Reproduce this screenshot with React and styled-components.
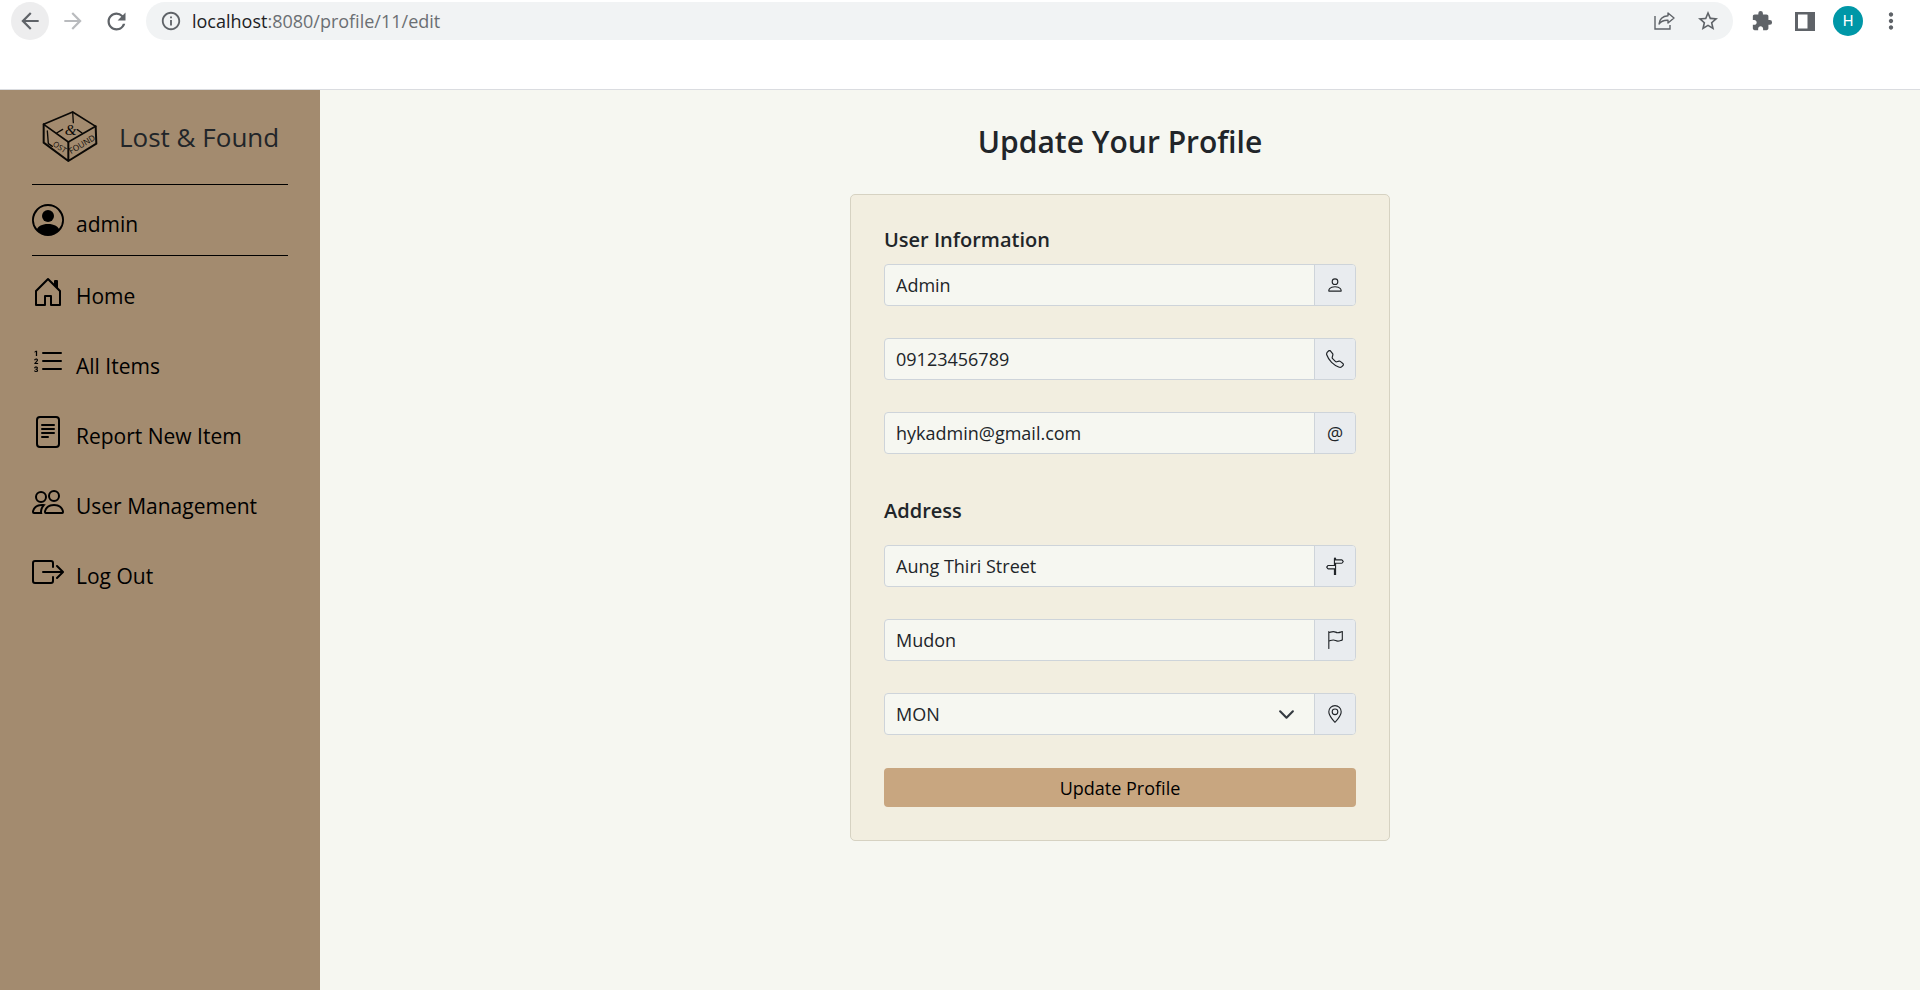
import React from "react";
import styled, { createGlobalStyle } from "styled-components";
import {
  BsPersonCircle,
  BsHouseDoor,
  BsListOl,
  BsFileText,
  BsPeople,
  BsBoxArrowRight,
  BsPerson,
  BsTelephone,
  BsSignpostSplit,
  BsFlag,
  BsGeoAlt,
} from "react-icons/bs";
import {
  MdArrowBack,
  MdArrowForward,
  MdRefresh,
  MdInfoOutline,
  MdStarOutline,
  MdExtension,
  MdMoreVert,
} from "react-icons/md";

const GlobalStyle = createGlobalStyle`
  *, *::before, *::after { box-sizing: border-box; }
  body {
    margin: 0;
    background: #ffffff;
    color: #212529;
    font-family: "Open Sans", "Noto Sans", sans-serif;
    font-size: 18px;
    line-height: 24px;
  }
  button, input, select { font: inherit; color: inherit; }
`;

const Page = styled.div`
  min-height: 100vh;
  display: flex;
  flex-direction: column;
`;

const BrowserBar = styled.header`
  display: flex;
  align-items: center;
  gap: 5px;
  padding: 2px 10px 49px 11px;
  border-bottom: 1px solid #dadce0;
`;

const ToolButton = styled.button`
  flex: none;
  display: grid;
  place-items: center;
  width: 38px;
  height: 38px;
  padding: 0;
  border: 0;
  border-radius: 50%;
  background: ${(p) => (p.$active ? "#ededee" : "transparent")};
  color: ${(p) => (p.$muted ? "#b9bbbe" : "#5f6368")};
  svg { display: block; }
`;

const AddressBar = styled.div`
  flex: 1;
  min-width: 0;
  display: flex;
  align-items: center;
  height: 38px;
  margin: 0 5px 0 6px;
  padding: 0 6px 0 14px;
  gap: 5px;
  border-radius: 19px;
  background: #f1f3f4;
  color: #5f6368;
`;

const Url = styled.span`
  flex: 1;
  padding-left: 5px;
  color: #6b6f73;
  white-space: nowrap;
  b { font-weight: 400; color: #202124; }
`;

const Avatar = styled.span`
  display: grid;
  place-items: center;
  width: 30px;
  height: 30px;
  border-radius: 50%;
  background: #0097a7;
  color: #ffffff;
  font: 15px/30px Roboto, sans-serif;
`;

const Body = styled.div`
  flex: 1;
  display: flex;
`;

const Sidebar = styled.aside`
  flex: none;
  width: 320px;
  padding: 21px 32px;
  background: #a38b6f;
`;

const Brand = styled.a`
  display: flex;
  align-items: center;
  gap: 22px;
  padding: 0 11px 22px;
  color: #212529;
  font-size: 26px;
  line-height: 36px;
  text-decoration: none;
  white-space: nowrap;
  svg { flex: none; display: block; overflow: visible; }
`;

const Account = styled.div`
  padding: 19px 0;
  border: solid #000000;
  border-width: 1px 0;
`;

const Menu = styled.nav`
  display: flex;
  flex-direction: column;
  gap: 38px;
  padding-top: 20px;
`;

const MenuLink = styled.a`
  display: flex;
  align-items: center;
  gap: 12px;
  height: 32px;
  color: #000000;
  font-size: 21px;
  text-decoration: none;
  svg { flex: none; width: 32px; height: 32px; }
  span { padding-top: 8px; }
`;

const Main = styled.main`
  flex: 1;
  display: flex;
  flex-direction: column;
  align-items: center;
  padding: 32px;
  background: #f6f7f1;
`;

const Title = styled.h1`
  margin: 0 0 32px;
  font-size: 30px;
  line-height: 40px;
  font-weight: 600;
`;

const Card = styled.form`
  width: 100%;
  max-width: 540px;
  padding: 31px 33px 33px;
  border: 1px solid #d6d2c2;
  border-radius: 5px;
  background: #f2eee0;
`;

const Group = styled.fieldset`
  display: flex;
  flex-direction: column;
  gap: 32px;
  min-width: 0;
  margin: 0 0 ${(p) => p.$after};
  padding: 0;
  border: 0;
`;

const GroupTitle = styled.legend`
  margin-bottom: ${(p) => p.$space};
  padding: 0;
  font-size: 20px;
  line-height: 28px;
  font-weight: 600;
`;

const Field = styled.div`
  display: flex;
  height: 42px;
  border: 1px solid #ced4da;
  border-radius: 4px;
  overflow: hidden;
  background: #f6f7f1;
`;

const Input = styled.input`
  flex: 1;
  min-width: 0;
  padding: 0 11px;
  border: 0;
  outline: 0;
  background: transparent;
`;

const SelectWrap = styled.div`
  position: relative;
  flex: 1;
  display: flex;
  svg {
    position: absolute;
    right: 19px;
    top: 12px;
    pointer-events: none;
  }
`;

const Select = styled.select`
  flex: 1;
  padding: 0 11px;
  border: 0;
  outline: 0;
  appearance: none;
  background: transparent;
`;

const Addon = styled.label`
  display: grid;
  place-items: center;
  width: 41px;
  border-left: 1px solid #ced4da;
  background: #e9ecef;
  svg { width: 18px; height: 18px; }
`;

const Submit = styled.button`
  width: 100%;
  height: 39px;
  border: 0;
  border-radius: 4px;
  background: #c8a680;
  color: #000000;
`;

function BoxLogo() {
  return (
    <svg width="54" height="51" viewBox="39 20 162 153" fill="none" stroke="#0b0906" strokeWidth="6" strokeLinecap="round" strokeLinejoin="round" aria-hidden="true">
      <path d="M128 23 41 60l74 53 82-47z" strokeWidth="5" />
      <path d="M41 60v55l74 55 84-52-2-52M115 113v57" />
      <path d="M128 23l2 32M98 75 80 86M142 76l14 10M52 80l3 38 12 8" strokeWidth="4" />
      <g fill="#0b0906" stroke="none" fontFamily="Open Sans, sans-serif">
        <text x="104" y="91" fontSize="46" fontFamily="Liberation Serif, serif" fontStyle="italic">&amp;</text>
        <text fontSize="23" transform="translate(67 123) rotate(34)">OST</text>
        <text fontSize="25" transform="translate(123 150) rotate(-31)">FOUND</text>
      </g>
    </svg>
  );
}

function ShareIcon() {
  return (
    <svg width="22" height="20" viewBox="0 0 22 20" fill="none" stroke="#5f6368" strokeWidth="1.4" aria-hidden="true">
      <path d="M1 5v13h15v-4" />
      <path d="M14 2l6 5-6 5V9.200C9.500 9 7 10 5 13c.4-4.600 3.500-7.800 9-8.300z" strokeLinejoin="round" />
    </svg>
  );
}

function PanelIcon() {
  return (
    <svg width="20" height="19" viewBox="0 0 20 19" aria-hidden="true">
      <path fill="#5f6368" fillRule="evenodd" d="M0 0h20v19H0zM3 2.500v14h9.500v-14z" />
    </svg>
  );
}

const account = { label: "admin", icon: BsPersonCircle };

const menu = [
  { label: "Home", icon: BsHouseDoor },
  { label: "All Items", icon: BsListOl },
  { label: "Report New Item", icon: BsFileText },
  { label: "User Management", icon: BsPeople },
  { label: "Log Out", icon: BsBoxArrowRight },
];

function MenuItem({ label, icon: Icon }) {
  return (
    <MenuLink href="#">
      <Icon aria-hidden="true" />
      <span>{label}</span>
    </MenuLink>
  );
}

function TextField({ id, name, type = "text", value, children }) {
  return (
    <Field>
      <Input id={id} type={type} defaultValue={value} aria-label={name} />
      <Addon htmlFor={id}>{children}</Addon>
    </Field>
  );
}

export default function App() {
  return (
    <Page>
      <GlobalStyle />
      <BrowserBar>
        <ToolButton $active aria-label="Back"><MdArrowBack size={26} /></ToolButton>
        <ToolButton $muted aria-label="Forward"><MdArrowForward size={26} /></ToolButton>
        <ToolButton aria-label="Reload"><MdRefresh size={27} /></ToolButton>
        <AddressBar>
          <MdInfoOutline size={22} />
          <Url><b>localhost</b>:8080/profile/11/edit</Url>
          <ToolButton aria-label="Share"><ShareIcon /></ToolButton>
          <ToolButton aria-label="Bookmark"><MdStarOutline size={24} /></ToolButton>
        </AddressBar>
        <ToolButton aria-label="Extensions"><MdExtension size={22} /></ToolButton>
        <ToolButton aria-label="Side panel"><PanelIcon /></ToolButton>
        <ToolButton aria-label="Account"><Avatar>H</Avatar></ToolButton>
        <ToolButton aria-label="Menu"><MdMoreVert size={26} /></ToolButton>
      </BrowserBar>
      <Body>
        <Sidebar>
          <Brand href="#"><BoxLogo />Lost &amp; Found</Brand>
          <Account><MenuItem {...account} /></Account>
          <Menu aria-label="Main">
            {menu.map((item) => <MenuItem key={item.label} {...item} />)}
          </Menu>
        </Sidebar>
        <Main>
          <Title>Update Your Profile</Title>
          <Card onSubmit={(e) => e.preventDefault()}>
            <Group $after="43px">
              <GroupTitle $space="10px">User Information</GroupTitle>
              <TextField id="name" name="Name" value="Admin"><BsPerson /></TextField>
              <TextField id="phone" name="Phone" type="tel" value="09123456789"><BsTelephone /></TextField>
              <TextField id="email" name="Email" type="email" value="hykadmin@gmail.com">@</TextField>
            </Group>
            <Group $after="33px">
              <GroupTitle $space="20px">Address</GroupTitle>
              <TextField id="street" name="Street" value="Aung Thiri Street"><BsSignpostSplit /></TextField>
              <TextField id="city" name="City" value="Mudon"><BsFlag /></TextField>
              <Field>
                <SelectWrap>
                  <Select id="state" defaultValue="MON" aria-label="State">
                    <option>MON</option>
                  </Select>
                  <svg width="17" height="17" viewBox="0 0 16 16" fill="none" stroke="#343a40" strokeWidth="2" strokeLinecap="round" strokeLinejoin="round" aria-hidden="true">
                    <path d="m2 5 6 6 6-6" />
                  </svg>
                </SelectWrap>
                <Addon htmlFor="state"><BsGeoAlt /></Addon>
              </Field>
            </Group>
            <Submit type="submit">Update Profile</Submit>
          </Card>
        </Main>
      </Body>
    </Page>
  );
}
